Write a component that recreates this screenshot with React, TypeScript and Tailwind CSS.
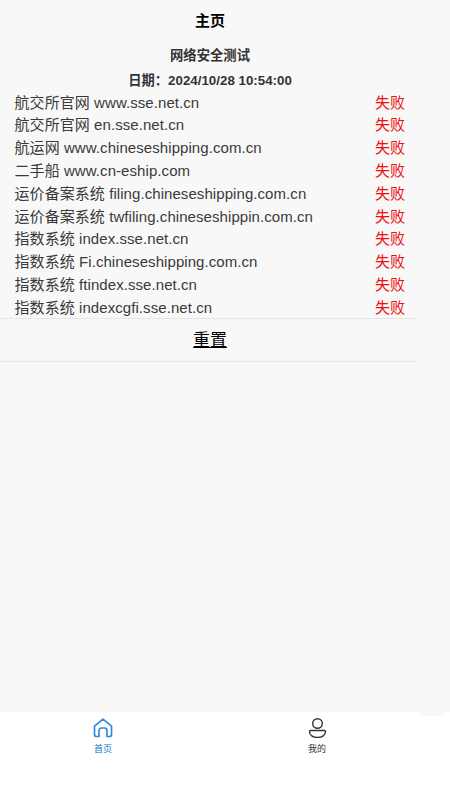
const rows = [
  "航交所官网 www.sse.net.cn",
  "航交所官网 en.sse.net.cn",
  "航运网 www.chineseshipping.com.cn",
  "二手船 www.cn-eship.com",
  "运价备案系统 filing.chineseshipping.com.cn",
  "运价备案系统 twfiling.chineseshippin.com.cn",
  "指数系统 index.sse.net.cn",
  "指数系统 Fi.chineseshipping.com.cn",
  "指数系统 ftindex.sse.net.cn",
  "指数系统 indexcgfi.sse.net.cn",
];

export default function App() {
  return (
    <div className="w-[450px] h-[800px] flex flex-col bg-white overflow-hidden font-['Liberation_Sans','Noto_Sans_CJK_SC',sans-serif]">
      <div className="h-[712px] shrink-0 bg-[#f8f8f8] flex flex-col">
        <div className="w-[420px] h-[42px] shrink-0 flex items-center justify-center text-[15px] font-bold text-black">主页</div>
        <div className="w-[420px] flex flex-col text-[#333]">
          <div className="h-[25px] mt-[1px] flex items-center justify-center text-[13.33px] font-bold">网络安全测试</div>
          <div className="h-[23.5px] pt-[3px] flex items-center justify-center text-[13.33px] font-bold">日期：2024/10/28 10:54:00</div>
          <div className="w-[416px] flex flex-col">
            {rows.map((r) => (
              <div key={r} className="h-[22.8px] pl-[14.5px] pr-[11px] flex items-center justify-between text-[15px] text-[#3a3a3a]">
                <span className="tracking-[0.07px]">{r}</span>
                <span className="text-[#f00f0f]">失败</span>
              </div>
            ))}
          </div>
          <div className="w-[416px] h-[44px] -mt-[1.5px] pt-[2px] pl-[4px] border-y border-[#e5e5e5] flex items-center justify-center text-[17px] text-black underline">重置</div>
        </div>
      </div>
      <div className="relative flex-1 flex items-start">
        <div className="absolute left-[419px] top-0 w-[24px] h-[4px] bg-[#f8f8f8]" />
        <div className="w-[206px] flex flex-col items-center pt-[6px]">
          <svg width="20" height="20" viewBox="0 0 20 20" fill="none" stroke="#2f8ae0" strokeWidth="1.7" strokeLinejoin="round">
            <path d="M1.500 8.200 10 1.200l8.500 7v8.300a2 2 0 0 1-2 2h-2.500v-6a2.500 2.500 0 0 0-2.500-2.500h-3a2.500 2.500 0 0 0-2.500 2.500v6H3.500a2 2 0 0 1-2-2Z" />
          </svg>
          <span className="mt-[5px] text-[9px] leading-[12px] text-[#0f6cc4]">首页</span>
        </div>
        <div className="w-[222px] flex flex-col items-center pt-[6px]">
          <svg width="20" height="20" viewBox="0 0 20 20" fill="none" stroke="#333" strokeWidth="1.400">
            <circle cx="10.500" cy="5.500" r="4.800" />
            <path d="M3.500 12.500h14a1 1 0 0 1 1 1c0 3.500-3.500 6-8 6s-8-2.500-8-6a1 1 0 0 1 1-1Z" />
          </svg>
          <span className="mt-[5px] text-[9px] leading-[12px] text-[#333]">我的</span>
        </div>
      </div>
    </div>
  );
}
